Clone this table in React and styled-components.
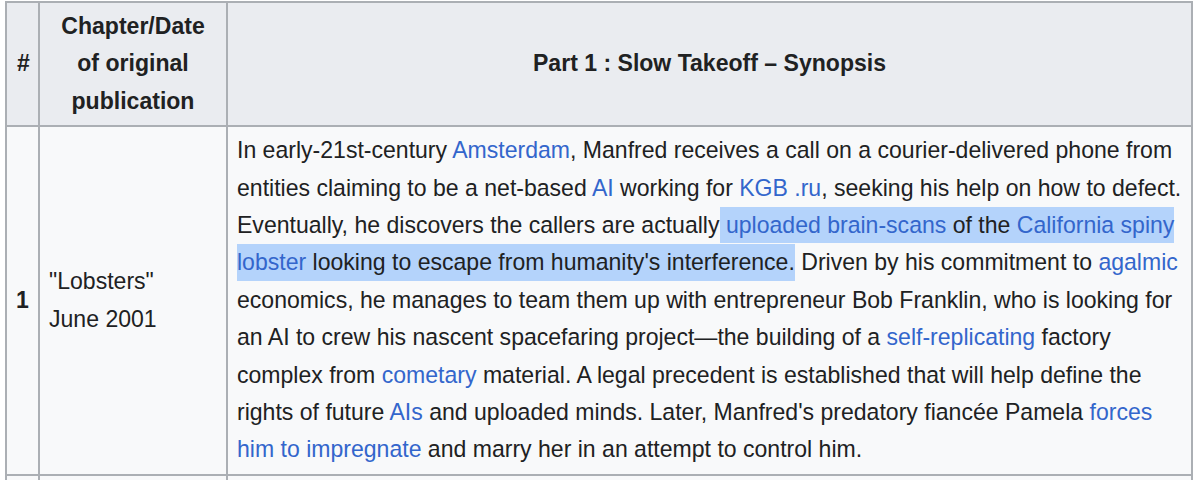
import React from 'react';
import styled, { createGlobalStyle } from 'styled-components';

const GlobalStyle = createGlobalStyle`
  html, body {
    margin: 0;
    padding: 0;
    background: #ffffff;
    overflow: hidden;
  }
  body {
    font-family: "Liberation Sans", Arial, Helvetica, sans-serif;
    color: #202122;
  }
`;

const Page = styled.div`
  padding: 1px 0 0 5px;
  height: 480px;
  box-sizing: border-box;
`;

const Table = styled.table`
  border-collapse: collapse;
  table-layout: fixed;
  width: 1188px;
  background: #f8f9fa;
  font-size: 23.05px;
  line-height: 37.4px;
  color: #202122;

  th, td {
    border: 2px solid #abafb4;
    padding: 5px 10px;
  }
`;

const HeadCell = styled.th`
  background: #eaecf0;
  font-weight: bold;
  text-align: center;
  vertical-align: middle;
`;

const Cell = styled.td`
  vertical-align: middle;
  text-align: ${(p) => (p.$center ? 'center' : 'left')};
  font-weight: ${(p) => (p.$bold ? 'bold' : 'normal')};
  padding: ${(p) => (p.$tight ? '5px 4px' : '5px 6px 5px 9px')} !important;
`;

const Link = styled.a`
  color: #3366cc;
  text-decoration: none;
`;

const Selected = styled.span`
  background: #b4d3fb;
  padding: 5.3px 0;
  box-decoration-break: clone;
  -webkit-box-decoration-break: clone;
`;

const EmptyRow = styled.tr`
  height: 40px;
`;

export default function App() {
  return (
    <>
      <GlobalStyle />
      <Page>
        <Table>
          <colgroup>
            <col style={{ width: 33 }} />
            <col style={{ width: 188 }} />
            <col />
          </colgroup>
          <thead>
            <tr>
              <HeadCell>#</HeadCell>
              <HeadCell>
                Chapter/Date
                <br />
                of original
                <br />
                publication
              </HeadCell>
              <HeadCell>Part 1 : Slow Takeoff – Synopsis</HeadCell>
            </tr>
          </thead>
          <tbody>
            <tr>
              <Cell $center $bold $tight>1</Cell>
              <Cell>
                &quot;Lobsters&quot;
                <br />
                June 2001
              </Cell>
              <Cell>
                In early-21st-century <Link href="#">Amsterdam</Link>, Manfred receives a call on a
                courier-delivered phone from entities claiming to be a net-based{' '}
                <Link href="#">AI</Link> working for <Link href="#">KGB .ru</Link>, seeking his help
                on how to defect. Eventually, he discovers the callers are actually
                <Selected>
                  {' '}
                  <Link href="#">uploaded brain-scans</Link> of the{' '}
                  <Link href="#">California spiny lobster</Link> looking to escape from humanity&apos;s
                  interference.
                </Selected>{' '}
                Driven by his commitment to <Link href="#">agalmic</Link> economics, he manages to
                team them up with entrepreneur Bob Franklin, who is looking for an AI to crew his
                nascent spacefaring project—the building of a{' '}
                <Link href="#">self-replicating</Link> factory complex from{' '}
                <Link href="#">cometary</Link> material. A legal precedent is established that will
                help define the rights of future <Link href="#">AIs</Link> and uploaded minds.
                Later, Manfred&apos;s predatory fiancée Pamela{' '}
                <Link href="#">forces him to impregnate</Link> and marry her in an attempt to
                control him.
              </Cell>
            </tr>
            <EmptyRow>
              <Cell />
              <Cell />
              <Cell />
            </EmptyRow>
          </tbody>
        </Table>
      </Page>
    </>
  );
}
